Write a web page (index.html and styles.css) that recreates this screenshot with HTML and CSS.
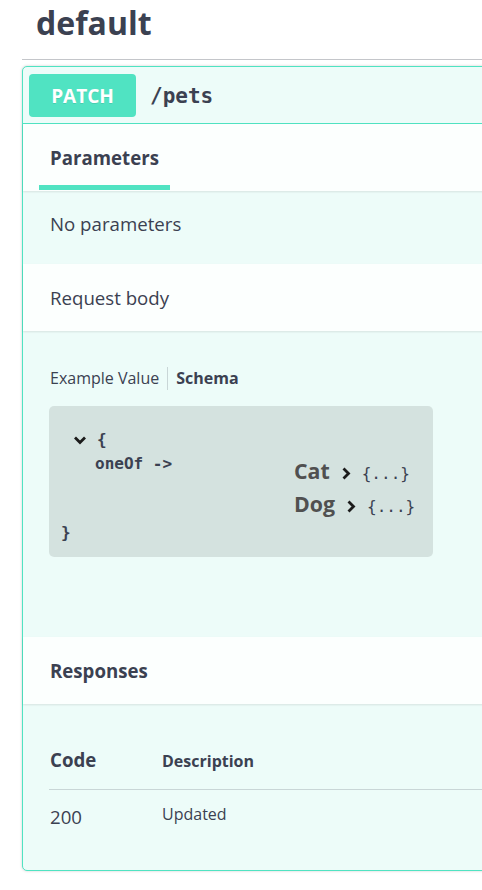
FILE: index.html
```html
<!DOCTYPE html>
<html lang="en">
<head>
<meta charset="utf-8">
<title>default</title>
<link rel="stylesheet" href="styles.css">
</head>
<body>
<div class="page">
  <div class="wrapper">
    <h3 class="tag">default</h3>
    <div class="opblock">
      <div class="summary">
        <span class="method">PATCH</span>
        <span class="path">/pets</span>
      </div>
      <div class="section-header tabs">
        <div class="tab">Parameters</div>
      </div>
      <div class="section-body">
        <p class="text">No parameters</p>
      </div>
      <div class="section-header plain">
        <div class="title-plain">Request body</div>
      </div>
      <div class="section-body request">
        <div class="model-tabs">
          <span class="mtab">Example Value</span>
          <span class="mtab active">Schema</span>
        </div>
        <div class="model-box">
          <div class="model-open">
            <svg class="chev-down" width="14" height="10" viewBox="0 0 14 10"><polyline points="2,2.5 7,7.5 12,2.5" fill="none" stroke="#1b1b1b" stroke-width="2.8"/></svg>
            <span class="brace">{</span>
          </div>
          <div class="model-inner">
            <span class="prop">oneOf -&gt;</span>
            <div class="variants">
              <div class="variant"><span class="mtitle">Cat</span><svg class="chev-right" width="12" height="13" viewBox="0 0 12 13"><polyline points="3.5,1.5 8.5,6.5 3.5,11.5" fill="none" stroke="#1b1b1b" stroke-width="2.8"/></svg><span class="collapsed">{...}</span></div>
              <div class="variant"><span class="mtitle">Dog</span><svg class="chev-right" width="12" height="13" viewBox="0 0 12 13"><polyline points="3.5,1.5 8.5,6.5 3.5,11.5" fill="none" stroke="#1b1b1b" stroke-width="2.8"/></svg><span class="collapsed">{...}</span></div>
            </div>
          </div>
          <div class="brace close">}</div>
        </div>
      </div>
      <div class="section-header plain">
        <div class="title-plain strong">Responses</div>
      </div>
      <div class="section-body responses">
        <div class="rtable">
          <div class="rrow head">
            <span class="c-code">Code</span>
            <span class="c-desc">Description</span>
          </div>
          <div class="rrow">
            <span class="c-code val">200</span>
            <span class="c-desc val">Updated</span>
          </div>
        </div>
      </div>
    </div>
  </div>
</div>
</body>
</html>
```

FILE: styles.css
```css
html, body {
  margin: 0;
  padding: 0;
  background: #ffffff;
  overflow: hidden;
}

.page {
  width: 482px;
  height: 890px;
  overflow: hidden;
}

.wrapper {
  width: 620px;
  padding-left: 22px;
  font-family: "Open Sans", "Liberation Sans", sans-serif;
  color: #3b4151;
}

.tag {
  margin: 0;
  padding: 1px 0 14px 14px;
  font-size: 32px;
  line-height: 44px;
  font-weight: 700;
  color: #3b4151;
  border-bottom: 1px solid rgba(59, 65, 81, 0.3);
}

.opblock {
  margin-top: 6px;
  border: 1px solid #50e3c2;
  border-radius: 5px;
  background: #edfcf9;
  box-shadow: 0 0 3px rgba(0, 0, 0, 0.19);
}

.summary {
  display: flex;
  align-items: center;
  padding: 7px 6px 6px;
  border-bottom: 1px solid #50e3c2;
}

.method {
  width: 107px;
  height: 43px;
  display: flex;
  align-items: center;
  justify-content: center;
  background: #50e3c2;
  border-radius: 4px;
  color: #ffffff;
  font-size: 19px;
  font-weight: 700;
  text-shadow: 0 1px 0 rgba(0, 0, 0, 0.1);
}

.path {
  margin-left: 14px;
  font-family: "DejaVu Sans Mono", "Liberation Mono", monospace;
  font-weight: 700;
  font-size: 21px;
  color: #3b4151;
}

.section-header {
  background: rgba(255, 255, 255, 0.8);
  box-shadow: 0 1px 2px rgba(0, 0, 0, 0.1);
  position: relative;
}

.tabs {
  padding: 21px 0 1px 16px;
  display: flex;
}

.tab {
  padding: 0 11px 14px;
  font-size: 18.67px;
  line-height: 26px;
  font-weight: 700;
  border-bottom: 5px solid #50e3c2;
}

.plain {
  padding: 21px 27px 20px;
}

.title-plain {
  font-size: 18.67px;
  line-height: 26px;
}

.title-plain.strong {
  font-weight: 700;
}

.section-body {
  padding: 20px 27px 27px;
}

.text {
  margin: 0;
  font-size: 18.67px;
  line-height: 26px;
}

.request {
  padding: 36px 0 80px 26px;
}

.model-tabs {
  display: flex;
  padding-left: 1px;
  font-size: 16px;
  line-height: 23px;
}

.mtab {
  padding-right: 8px;
}

.mtab.active {
  padding-left: 8px;
  border-left: 1px solid rgba(59, 65, 81, 0.2);
  font-weight: 700;
}

.model-box {
  margin-top: 16px;
  width: 384px;
  box-sizing: border-box;
  padding: 24px 0 14.5px;
  background: rgba(0, 0, 0, 0.1);
  border-radius: 5px;
  font-family: "DejaVu Sans Mono", "Liberation Mono", monospace;
  font-size: 16px;
  line-height: 20px;
  font-weight: 700;
  color: #3b4151;
}

.model-open {
  display: flex;
  align-items: center;
  padding-left: 24px;
  height: 20px;
}

.chev-down {
  display: block;
}

.brace {
  margin-left: 10px;
}

.model-inner {
  display: flex;
  margin-top: 4px;
  padding-left: 46px;
}

.prop {
  width: 199px;
  flex: none;
}

.variant {
  font-family: "Open Sans", "Liberation Sans", sans-serif;
  font-size: 21.33px;
  line-height: 33px;
  height: 33px;
  font-weight: 700;
  color: #505050;
}

.chev-right {
  vertical-align: middle;
  margin-left: 10px;
}

.collapsed {
  margin-left: 10px;
  font-family: "DejaVu Sans Mono", "Liberation Mono", monospace;
  font-size: 16px;
  line-height: 16px;
  font-weight: 400;
  color: #3b4151;
}

.close {
  margin: 2.5px 0 0 12px;
}

.responses {
  padding: 43px 0 40px 26px;
}

.rrow {
  display: flex;
  align-items: baseline;
}

.rrow.head {
  padding: 0 0 16px 1px;
  border-bottom: 1px solid rgba(59, 65, 81, 0.2);
}

.rrow:not(.head) {
  align-items: flex-start;
  padding: 14px 0 0 1px;
}

.c-code {
  width: 112px;
  flex: none;
  font-size: 18.67px;
  line-height: 26px;
  font-weight: 700;
}

.c-desc {
  font-size: 16px;
  line-height: 22px;
  font-weight: 700;
}

.c-code.val {
  font-weight: 400;
}

.c-desc.val {
  font-weight: 400;
  line-height: 20px;
}
```
